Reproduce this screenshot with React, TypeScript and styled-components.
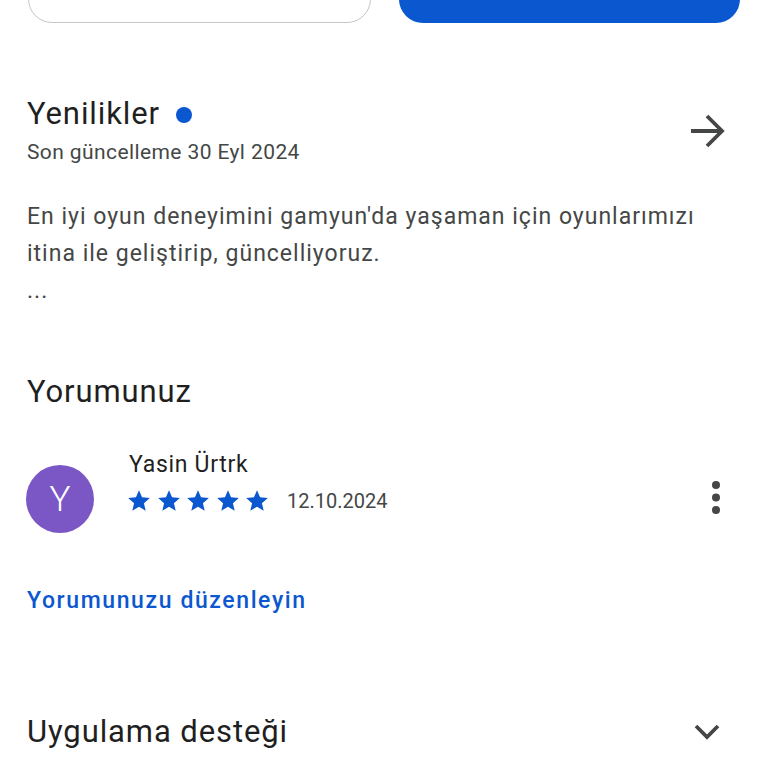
import React from "react";
import styled, { createGlobalStyle } from "styled-components";

const Global = createGlobalStyle`
  html, body { margin: 0; padding: 0; background: #ffffff; }
  body { font-family: Roboto, "Noto Sans", "Liberation Sans", sans-serif; overflow: hidden; }
  * { box-sizing: border-box; }
`;

const Page = styled.div`
  width: 768px;
  height: 768px;
  overflow: hidden;
  display: flex;
  flex-direction: column;
`;

const ButtonRow = styled.div`
  display: flex;
  gap: 28px;
  padding: 0 28px;
  margin-top: -25px;
`;

const Button = styled.div<{ $primary?: boolean }>`
  flex: 1;
  height: 48px;
  border-radius: 24px;
  background: ${(p) => (p.$primary ? "#0b57d0" : "#ffffff")};
  border: ${(p) => (p.$primary ? "none" : "1.5px solid #c4c7c5")};
`;

const Section = styled.div<{ $top: number }>`
  padding: 0 40px 0 27px;
  margin-top: ${(p) => p.$top}px;
`;

const HeaderRow = styled.div`
  display: flex;
  align-items: center;
  justify-content: space-between;
`;

const TitleLine = styled.div`
  display: flex;
  align-items: center;
  gap: 16px;
`;

const Title = styled.h2`
  margin: 0;
  font-size: 31px;
  line-height: 38px;
  font-weight: 400;
  color: #1f1f1f;
  letter-spacing: 0.9px;
`;

const Dot = styled.span`
  width: 16px;
  height: 16px;
  border-radius: 50%;
  background: #0b57d0;
  margin-top: 2px;
`;

const Subtitle = styled.div`
  font-size: 21px;
  line-height: 28px;
  color: #444746;
  letter-spacing: 0.4px;
  margin-top: 5px;
`;

const Body = styled.p`
  margin: 0;
  font-size: 23px;
  line-height: 37px;
  color: #444746;
  letter-spacing: 1px;
`;

const ReviewRow = styled.div`
  display: flex;
  align-items: flex-start;
`;

const Avatar = styled.div`
  width: 68px;
  height: 68px;
  border-radius: 50%;
  background: #7b57c6;
  color: #ffffff;
  font-size: 35px;
  font-weight: 300;
  display: flex;
  align-items: center;
  justify-content: center;
  margin-top: 15px;
  margin-left: -1px;
  flex-shrink: 0;
`;

const ReviewBody = styled.div`
  flex: 1;
  margin-left: 35px;
`;

const Name = styled.div`
  font-size: 23px;
  line-height: 30px;
  color: #1f1f1f;
  letter-spacing: 0.7px;
`;

const RatingRow = styled.div`
  display: flex;
  align-items: center;
  margin-top: 8px;
  margin-left: -3px;
`;

const Stars = styled.div`
  display: flex;
  gap: 3.5px;
`;

const DateText = styled.span`
  font-size: 20px;
  line-height: 26px;
  color: #444746;
  margin-left: 17px;
`;

const MenuIcon = styled.div`
  margin-top: 31px;
  margin-right: 8px;
  display: flex;
`;

const Link = styled.div`
  font-size: 23px;
  line-height: 30px;
  font-weight: 500;
  color: #0b57d0;
  letter-spacing: 1.6px;
`;

const Star = () => (
  <svg width="26" height="26" viewBox="0 0 24 24">
    <path
      fill="#0b57d0"
      d="M12 17.27L18.18 21l-1.64-7.03L22 9.24l-7.19-.61L12 2 9.19 8.63 2 9.24l5.46 4.73L5.82 21z"
    />
  </svg>
);

export default function App() {
  return (
    <Page>
      <Global />
      <ButtonRow>
        <Button />
        <Button $primary />
      </ButtonRow>

      <Section $top={72}>
        <HeaderRow>
          <div>
            <TitleLine>
              <Title>Yenilikler</Title>
              <Dot />
            </TitleLine>
            <Subtitle>Son güncelleme 30 Eyl 2024</Subtitle>
          </div>
          <svg width="38" height="36" viewBox="0 0 38 36" style={{ marginRight: 2 }}>
            <path
              d="M3 18 H34 M19 3 L34 18 L19 33"
              fill="none"
              stroke="#444746"
              strokeWidth="3.8"
              strokeLinejoin="miter"
            />
          </svg>
        </HeaderRow>
      </Section>

      <Section $top={32}>
        <Body>
          En iyi oyun deneyimini gamyun'da yaşaman için oyunlarımızı
          <br />
          itina ile geliştirip, güncelliyoruz.
          <br />
          ...
        </Body>
      </Section>

      <Section $top={64}>
        <Title>Yorumunuz</Title>
      </Section>

      <Section $top={39}>
        <ReviewRow>
          <Avatar>Y</Avatar>
          <ReviewBody>
            <Name>Yasin Ürtrk</Name>
            <RatingRow>
              <Stars>
                <Star />
                <Star />
                <Star />
                <Star />
                <Star />
              </Stars>
              <DateText>12.10.2024</DateText>
            </RatingRow>
          </ReviewBody>
          <MenuIcon>
            <svg width="8" height="34" viewBox="0 0 8 34">
              <circle cx="4" cy="4" r="4" fill="#444746" />
              <circle cx="4" cy="16.5" r="4" fill="#444746" />
              <circle cx="4" cy="29" r="4" fill="#444746" />
            </svg>
          </MenuIcon>
        </ReviewRow>
      </Section>

      <Section $top={53}>
        <Link>Yorumunuzu düzenleyin</Link>
      </Section>

      <Section $top={97}>
        <HeaderRow>
          <Title>Uygulama desteği</Title>
          <svg width="26" height="18" viewBox="0 0 26 18" style={{ marginRight: 8 }}>
            <path d="M2 3 L13 14 L24 3" fill="none" stroke="#444746" strokeWidth="3.8" />
          </svg>
        </HeaderRow>
      </Section>
    </Page>
  );
}
